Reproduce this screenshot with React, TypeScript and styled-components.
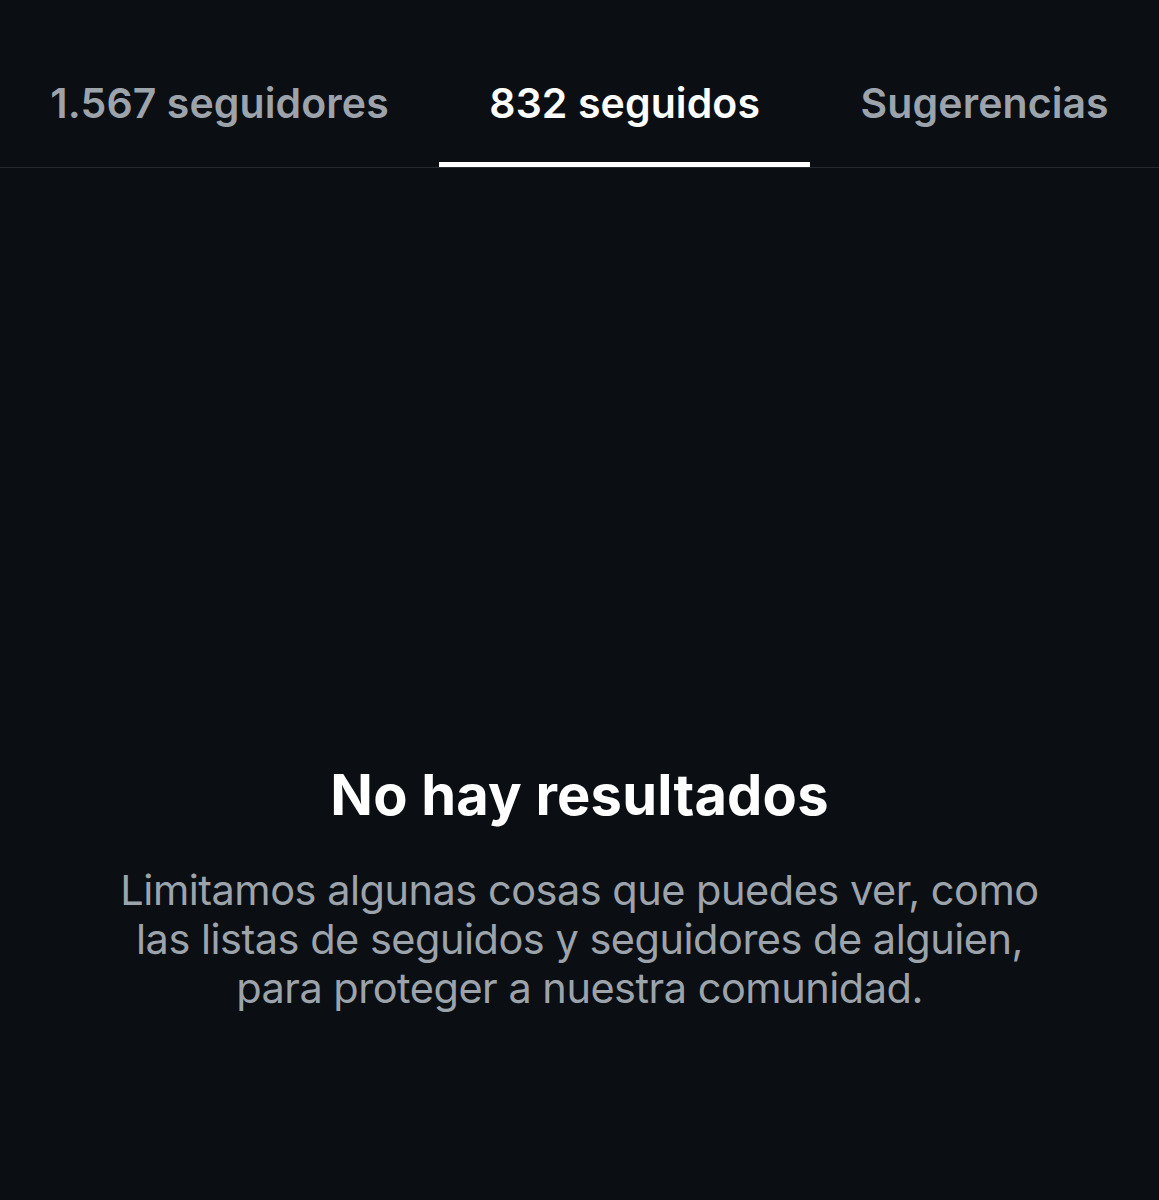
import React from "react";
import styled, { createGlobalStyle } from "styled-components";

const GlobalStyle = createGlobalStyle`
  html, body {
    margin: 0;
    padding: 0;
    background: #0b0f14;
  }
  body {
    font-family: Inter, "Noto Sans", "Liberation Sans", sans-serif;
    -webkit-font-smoothing: antialiased;
  }
`;

const Screen = styled.div`
  width: 1159px;
  min-height: 1200px;
  background: #0b0f14;
  display: flex;
  flex-direction: column;
`;

const TabBar = styled.nav`
  display: flex;
  height: 167px;
  border-bottom: 1px solid #262b30;
`;

const Tab = styled.div<{ $active?: boolean }>`
  position: relative;
  flex: 1 1 auto;
  display: flex;
  justify-content: center;
  align-items: flex-start;
  padding: 78px 50px 0;
  font-size: 41px;
  line-height: 50px;
  font-weight: 600;
  letter-spacing: 0.1px;
  white-space: nowrap;
  color: ${(p) => (p.$active ? "#ffffff" : "#9ca3ab")};
`;

const Indicator = styled.span`
  position: absolute;
  left: 0;
  right: 0;
  bottom: 0;
  height: 5px;
  background: #ffffff;
`;

const Empty = styled.section`
  display: flex;
  flex-direction: column;
  align-items: center;
  padding-top: 593px;
  text-align: center;
`;

const Title = styled.h2`
  margin: 0;
  font-size: 56px;
  line-height: 68px;
  font-weight: 700;
  color: #ffffff;
  letter-spacing: 0.2px;
`;

const Message = styled.p`
  margin: 37px 0 0;
  font-size: 41.5px;
  line-height: 49px;
  font-weight: 400;
  letter-spacing: -0.5px;
  color: #9ca3ab;
`;

export default function App() {
  return (
    <>
      <GlobalStyle />
      <Screen>
        <TabBar>
          <Tab>1.567 seguidores</Tab>
          <Tab $active>
            832 seguidos
            <Indicator />
          </Tab>
          <Tab>Sugerencias</Tab>
        </TabBar>
        <Empty>
          <Title>No hay resultados</Title>
          <Message>
            Limitamos algunas cosas que puedes ver, como
            <br />
            las listas de seguidos y seguidores de alguien,
            <br />
            para proteger a nuestra comunidad.
          </Message>
        </Empty>
      </Screen>
    </>
  );
}
